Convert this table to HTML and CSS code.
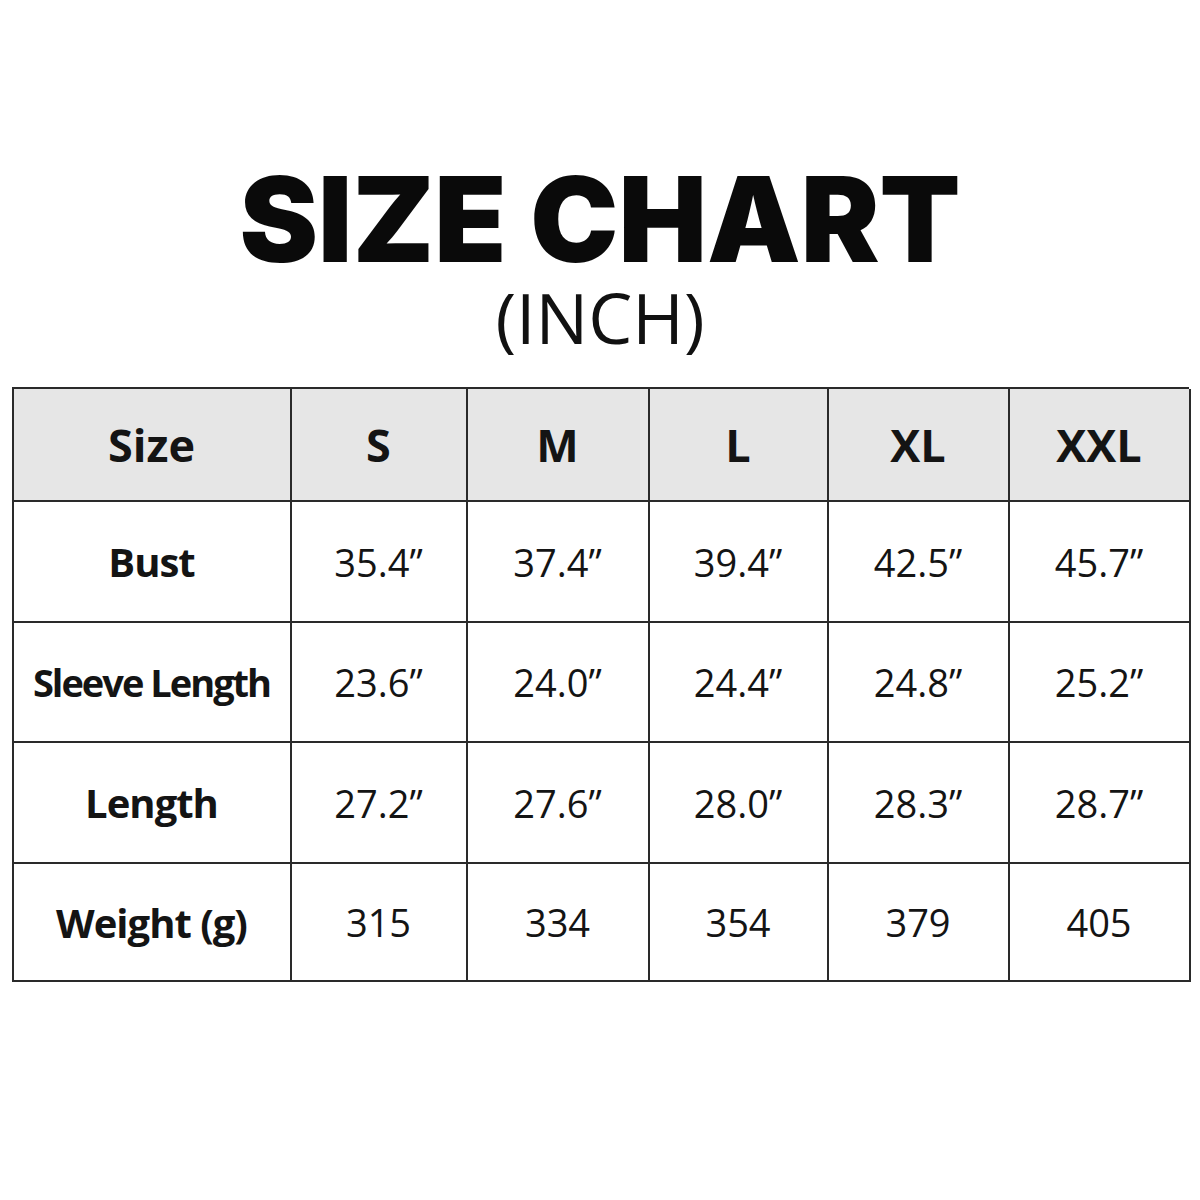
FILE: index.html
```html
<!DOCTYPE html>
<html>
<head>
<meta charset="utf-8">
<link rel="stylesheet" href="styles.css">
</head>
<body>
<div class="page">
  <h1 class="title">SIZE CHART</h1>
  <div class="subtitle">(INCH)</div>
  <div class="chart">
    <div class="cell head">Size</div>
    <div class="cell head">S</div>
    <div class="cell head">M</div>
    <div class="cell head">L</div>
    <div class="cell head">XL</div>
    <div class="cell head">XXL</div>

    <div class="cell label">Bust</div>
    <div class="cell">35.4”</div>
    <div class="cell">37.4”</div>
    <div class="cell">39.4”</div>
    <div class="cell">42.5”</div>
    <div class="cell">45.7”</div>

    <div class="cell label narrow">Sleeve Length</div>
    <div class="cell">23.6”</div>
    <div class="cell">24.0”</div>
    <div class="cell">24.4”</div>
    <div class="cell">24.8”</div>
    <div class="cell">25.2”</div>

    <div class="cell label">Length</div>
    <div class="cell">27.2”</div>
    <div class="cell">27.6”</div>
    <div class="cell">28.0”</div>
    <div class="cell">28.3”</div>
    <div class="cell">28.7”</div>

    <div class="cell label">Weight (g)</div>
    <div class="cell">315</div>
    <div class="cell">334</div>
    <div class="cell">354</div>
    <div class="cell">379</div>
    <div class="cell">405</div>
  </div>
</div>
</body>
</html>
```

FILE: styles.css
```css
html, body {
  margin: 0;
  padding: 0;
  background: #ffffff;
}
.page {
  width: 1200px;
  height: 1200px;
  display: flex;
  flex-direction: column;
  align-items: center;
  color: #111;
  font-family: "Open Sans", "Liberation Sans", sans-serif;
}
.title {
  margin: 169px 0 0 0;
  font-family: Inter, "Liberation Sans", sans-serif;
  font-weight: 900;
  font-size: 118px;
  line-height: 100px;
  letter-spacing: 0;
  color: #0a0a0a;
}
.subtitle {
  margin-top: 6px;
  font-size: 70px;
  line-height: 84px;
  font-weight: 400;
  color: #111;
}
.chart {
  margin-top: 28px;
  width: 1177px;
  display: grid;
  grid-template-columns: 278px 176px 182px 179px 181px 181px;
  grid-template-rows: 113px 121px 120px 121px 118px;
  border-top: 2px solid #2a2a2a;
  border-left: 2px solid #2a2a2a;
  box-sizing: border-box;
}
.cell {
  display: flex;
  align-items: center;
  justify-content: center;
  border-right: 2px solid #2a2a2a;
  border-bottom: 2px solid #2a2a2a;
  font-size: 38px;
  font-weight: 400;
  color: #141414;
  box-sizing: border-box;
}
.head {
  background: #e6e6e6;
  font-weight: 700;
  font-size: 45px;
}
.label {
  font-weight: 700;
  font-size: 40px;
  letter-spacing: -1px;
}
.narrow {
  font-size: 38px;
  letter-spacing: -2px;
}
```
